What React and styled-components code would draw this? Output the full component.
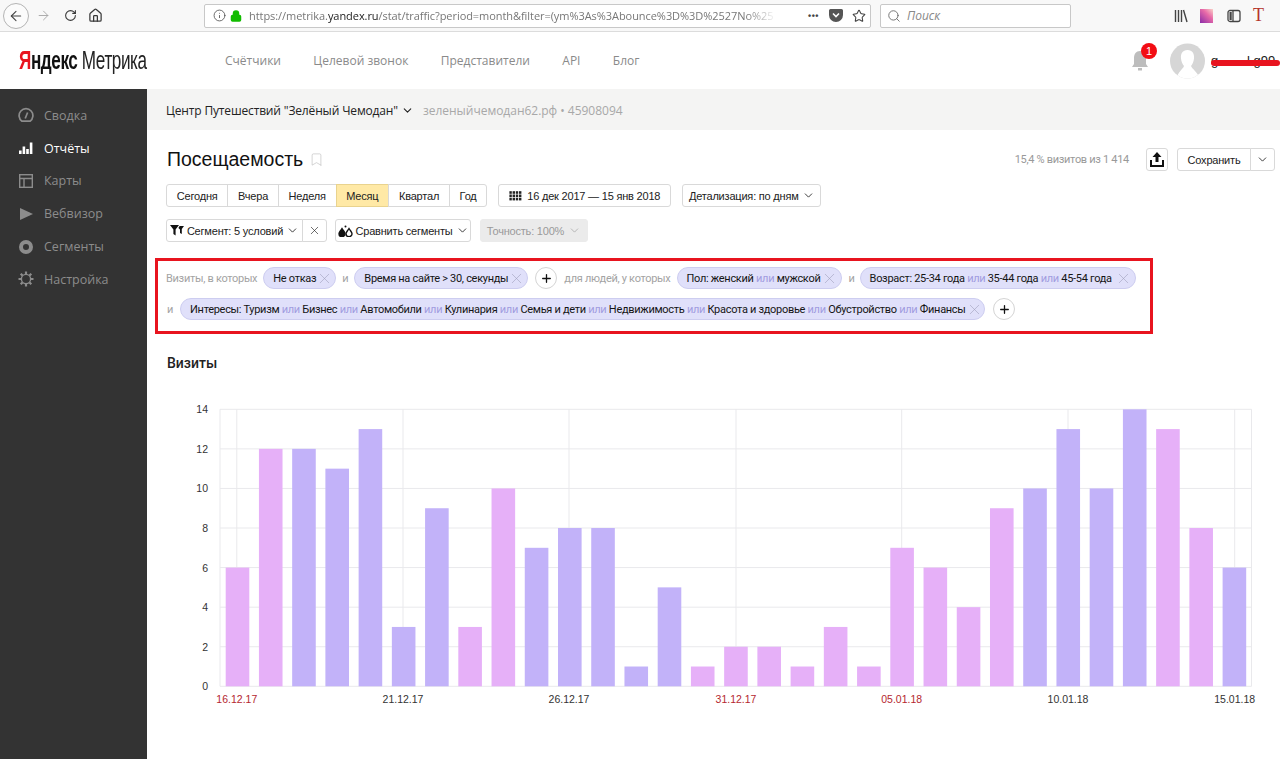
import React from 'react';
import styled, { createGlobalStyle } from 'styled-components';
import { ArrowLeft, ArrowRight, RotateCw, Home, Info, Lock, Star, Search, X, ChevronDown, Plus, Bookmark } from 'lucide-react';

const GlobalStyle = createGlobalStyle`
  html, body { margin: 0; padding: 0; background: #fff; }
  body { font-family: "Liberation Sans", Arial, sans-serif; color: #222; }
`;

const Page = styled.div`
  width: 1280px;
  height: 759px;
  overflow: hidden;
  display: flex;
  flex-direction: column;
`;

/* browser chrome */
const BrowserBar = styled.div`
  height: 32px;
  box-sizing: border-box;
  flex: none;
  background: #f8f8f8;
  border-bottom: 1px solid #dcdcdc;
  display: flex;
  align-items: center;
  color: #444;
`;
const BackCircle = styled.div`
  width: 26px;
  height: 26px;
  margin-left: 3px;
  border: 1px solid #b4b4b4;
  border-radius: 50%;
  box-sizing: border-box;
  display: flex;
  align-items: center;
  justify-content: center;
  background: #fbfbfb;
`;
const NavIcon = styled.div`
  display: flex;
  flex: none;
  margin-left: ${p => p.$left}px;
  color: ${p => p.$dim ? '#a8a8a8' : '#3a3a3a'};
`;
const UrlBox = styled.div`
  margin-left: 101px;
  width: 667px;
  height: 24px;
  box-sizing: border-box;
  background: #fff;
  border: 1px solid #c8c8c8;
  border-radius: 2px;
  display: flex;
  align-items: center;
  padding: 0 4px 0 8px;
  gap: 4px;
`;
const UrlText = styled.div`
  width: 528px;
  flex: none;
  margin-left: 3px;
  font: 11px "Open Sans", sans-serif;
  letter-spacing: -0.06px;
  color: #777;
  white-space: nowrap;
  mask-image: linear-gradient(to right, #000 94%, transparent 100%);
  b { font-weight: 400; color: #222; }
`;
const Dots = styled.span`
  margin-left: auto;
  font: bold 9px "Liberation Sans", sans-serif;
  letter-spacing: 0.5px;
  color: #444;
  margin-right: 6px;
`;
const SearchBox = styled(UrlBox)`
  margin-left: 9px;
  width: 191px;
  padding: 0 6px;
  gap: 6px;
  font: italic 12px "Open Sans", sans-serif;
  color: #888;
`;
const ChromeRight = styled.div`
  margin-left: auto;
  width: 106px;
  display: flex;
  align-items: center;
`;
const Swatch = styled.div`
  width: 13px;
  height: 14px;
  margin-left: 12px;
  background: linear-gradient(45deg, #8a2ca8, #e86aa8 60%, #f9d3c8);
`;
const RedT = styled.div`
  margin-left: 12px;
  font: 18px "Liberation Serif", serif;
  color: #b5342a;
`;

/* site header */
const Header = styled.header`
  height: 57px;
  flex: none;
  background: #fff;
  display: flex;
  align-items: center;
`;
const LogoCell = styled.div`
  width: 147px;
  padding-left: 19px;
  box-sizing: border-box;
  flex: none;
`;
const Logo = styled.div`
  display: inline-block;
  font: 25px "Liberation Sans", sans-serif;
  letter-spacing: -0.6px;
  white-space: nowrap;
  color: #222;
  transform: scaleX(0.685);
  transform-origin: left center;
  b { font-weight: 700; color: #111; }
  i { font-style: normal; color: #e8141f; font-weight: 700; }
`;
const TopNav = styled.nav`
  margin-left: 78px;
  display: flex;
  gap: 32.4px;
`;
const TopLink = styled.a`
  font: 12px "Open Sans", sans-serif;
  color: #8a8a8a;
`;
const UserArea = styled.div`
  margin-left: auto;
  display: flex;
  align-items: center;
  width: 150px;
  flex: none;
  position: relative;
`;
const Badge = styled.span`
  position: absolute;
  left: 11px;
  top: 0;
  width: 16px;
  height: 16px;
  border-radius: 50%;
  background: #f20d14;
  color: #fff;
  font: 11px/16px "Liberation Sans", sans-serif;
  text-align: center;
`;
const UserName = styled.span`
  margin-left: 6px;
  font: 13px "Liberation Sans", sans-serif;
  white-space: pre;
  color: #222;
`;
const Scribble = styled.div`
  position: absolute;
  left: 81px;
  top: 17px;
  width: 69px;
  height: 6px;
  border-radius: 3px;
  background: #e8141f;
`;

/* body */
const Body = styled.div`
  flex: 1;
  display: flex;
  min-height: 0;
`;
const Sidebar = styled.aside`
  width: 147px;
  flex: none;
  background: #333;
  padding-top: 10px;
  box-sizing: border-box;
`;
const SideItem = styled.div`
  height: 32.8px;
  display: flex;
  align-items: center;
  padding-left: 18px;
  gap: 10px;
  font: 12.5px "Open Sans", sans-serif;
  color: ${p => p.$active ? '#fff' : '#8c8c8c'};
`;
const Main = styled.main`
  flex: 1;
  min-width: 0;
`;
const SubHeader = styled.div`
  height: 41px;
  box-sizing: border-box;
  background: #f4f4f3;
  padding: 1px 0 0 19px;
  display: flex;
  align-items: center;
  font: 12px "Open Sans", sans-serif;
  letter-spacing: -0.15px;
  color: #222;
`;
const Muted = styled.span`
  margin-left: 9px;
  letter-spacing: -0.02px;
  color: #a8a8a8;
`;
const TitleRow = styled.div`
  height: 54px;
  box-sizing: border-box;
  padding: 5px 5px 0 20px;
  display: flex;
  align-items: center;
`;
const Title = styled.h1`
  margin: 0;
  font: 400 19.5px "Liberation Sans", sans-serif;
  color: #111;
`;
const Stat = styled.span`
  margin-left: auto;
  margin-right: 17px;
  font: 11px "Roboto", sans-serif;
  letter-spacing: -0.3px;
  color: #999;
`;
const Controls = styled.div`
  display: flex;
  align-items: center;
  padding-left: 19px;
  margin-bottom: ${p => p.$gap}px;
`;
const Btn = styled.button`
  height: 23px;
  padding: ${p => p.$pad || '0 9.75px'};
  margin: 0 0 0 ${p => p.$left || 0}px;
  box-sizing: border-box;
  display: inline-flex;
  align-items: center;
  gap: ${p => p.$gap ?? 4}px;
  width: ${p => p.$w ? `${p.$w}px` : 'auto'};
  justify-content: ${p => p.$w ? 'center' : 'flex-start'};
  background: ${p => p.$on ? '#ffe9a6' : p.$off ? '#ebebeb' : '#fff'};
  border: 1px solid ${p => p.$on ? '#e9d38e' : p.$off ? '#ebebeb' : '#d9d9d9'};
  border-radius: 3px;
  font: 11px "Liberation Sans", sans-serif;
  letter-spacing: -0.2px;
  color: ${p => p.$off ? '#9a9a9a' : '#222'};
  white-space: nowrap;
  svg { flex: none; }
`;
const Group = styled.div`
  display: flex;
  margin-left: ${p => p.$left || 0}px;
  ${Btn} { border-radius: 0; margin-left: -1px; }
  ${Btn}:first-child { border-radius: 3px 0 0 3px; margin-left: 0; }
  ${Btn}:last-child { border-radius: 0 3px 3px 0; }
`;

/* filter panel */
const FilterPanel = styled.section`
  margin: 16px 0 0 8px;
  width: 998px;
  height: 76px;
  box-sizing: border-box;
  border: 3px solid #e8141f;
  padding: 6px 0 0 8px;
  display: flex;
  flex-direction: column;
  gap: 9px;
`;
const FilterRow = styled.div`
  display: flex;
  align-items: center;
  height: 22px;
`;
const Hint = styled.span`
  font: 11px "Roboto", sans-serif;
  letter-spacing: -0.3px;
  color: #a3a3a3;
  margin: 0 ${p => p.$right}px 0 ${p => p.$left || 0}px;
  white-space: nowrap;
`;
const Chip = styled.div`
  height: 22px;
  width: ${p => p.$w}px;
  box-sizing: border-box;
  flex: none;
  border: 1px solid #cdcdf0;
  border-radius: 11px;
  background: #e0e0fa;
  display: flex;
  align-items: center;
  justify-content: space-between;
  padding: 0 3px 0 9px;
  font: 11px "Roboto", sans-serif;
  letter-spacing: -0.3px;
  color: #151515;
  white-space: nowrap;
  svg { color: #9c9cb8; flex: none; }
  em { font-style: normal; color: #a09ce0; }
`;
const AddBtn = styled.div`
  width: 22px;
  height: 22px;
  flex: none;
  box-sizing: border-box;
  border: 1px solid #d4d4d4;
  border-radius: 50%;
  display: flex;
  align-items: center;
  justify-content: center;
  background: #fff;
  color: #111;
  margin-left: ${p => p.$left}px;
`;
const SectionTitle = styled.h2`
  margin: 21px 0 0 20px;
  font: 500 14px "Roboto", sans-serif;
  color: #222;
`;
const ChartSvg = styled.svg`
  display: block;
  margin-top: 28px;
  margin-left: 19px;
`;

const ORIGIN_X = 166;
const ORIGIN_Y = 398;
const PLOT = { left: 220, right: 1251.5, top: 408.3, bottom: 685.3 };
const BAR_W = 23.6;
const BAR_STEP = 33.23;
const FIRST_BAR = 225.7;
const UNIT = (PLOT.bottom - PLOT.top) / 14;
const PINK = '#e6b0f8';
const VIOLET = '#c2b2f9';

const bars = [
  [6, 'p'], [12, 'p'], [12, 'v'], [11, 'v'], [13, 'v'], [3, 'v'], [9, 'v'], [3, 'p'], [10, 'p'], [7, 'v'], [8, 'v'],
  [8, 'v'], [1, 'v'], [5, 'v'], [1, 'p'], [2, 'p'], [2, 'p'], [1, 'p'], [3, 'p'], [1, 'p'], [7, 'p'], [6, 'p'],
  [4, 'p'], [9, 'p'], [10, 'v'], [13, 'v'], [10, 'v'], [14, 'v'], [13, 'p'], [8, 'p'], [6, 'v'],
];

const dates = [
  ['16.12.17', 236.8, true], ['21.12.17', 403, false], ['26.12.17', 569, false], ['31.12.17', 736, true],
  ['05.01.18', 901.7, true], ['10.01.18', 1068, false], ['15.01.18', 1234.7, false],
];

const Chart = () => (
  <ChartSvg width="1100" height="320" viewBox={`${ORIGIN_X} ${ORIGIN_Y} 1100 320`} fontFamily="Liberation Sans, sans-serif" fontSize="10.5">
    {[0, 2, 4, 6, 8, 10, 12, 14].map(v => {
      const y = PLOT.bottom - v * UNIT;
      return (
        <g key={v}>
          <line x1={PLOT.left} x2={PLOT.right} y1={y} y2={y} stroke="#e9e9ec" />
          <text x="208" y={y + 4} textAnchor="end" fill="#333">{v}</text>
        </g>
      );
    })}
    <line x1={PLOT.left} x2={PLOT.left} y1={PLOT.top} y2={PLOT.bottom} stroke="#e9e9ec" />
    <line x1={PLOT.right} x2={PLOT.right} y1={PLOT.top} y2={PLOT.bottom} stroke="#e9e9ec" />
    {dates.map(([label, x, weekend]) => (
      <g key={label}>
        <line x1={x} x2={x} y1={PLOT.top} y2={PLOT.bottom} stroke="#e9e9ec" />
        <text x={x} y="702" textAnchor="middle" fill={weekend ? '#b5272f' : '#333'}>{label}</text>
      </g>
    ))}
    {bars.map(([v, kind], i) => (
      <rect
        key={i}
        x={FIRST_BAR + i * BAR_STEP}
        y={PLOT.bottom - v * UNIT}
        width={BAR_W}
        height={v * UNIT}
        fill={kind === 'p' ? PINK : VIOLET}
      />
    ))}
  </ChartSvg>
);

const Gauge = () => (
  <svg width="16" height="16" viewBox="0 0 16 16" fill="none" stroke="currentColor" strokeWidth="1.7">
    <path d="M4 14.2A6.9 6.9 0 1 1 12 14.2Z" />
    <path d="M7.2 11.5L9.6 5.5" />
  </svg>
);
const Bars = () => (
  <svg width="16" height="16" viewBox="0 0 16 16" fill="currentColor">
    <rect x="1" y="10.5" width="2.6" height="3.5" />
    <rect x="4.6" y="6.5" width="2.6" height="7.5" />
    <rect x="8.2" y="9" width="2.6" height="5" />
    <rect x="11.8" y="2.5" width="2.6" height="11.5" />
  </svg>
);
const Panels = () => (
  <svg width="16" height="16" viewBox="0 0 16 16" fill="none" stroke="currentColor" strokeWidth="1.4">
    <rect x="1.7" y="1.7" width="12.6" height="12.6" />
    <path d="M1.7 5.5H14.3M6 5.5V14.3" />
  </svg>
);
const Play = () => (
  <svg width="16" height="16" viewBox="0 0 16 16" fill="currentColor">
    <path d="M2 2L15 8L2 14Z" />
  </svg>
);
const Donut = () => (
  <svg width="16" height="16" viewBox="0 0 16 16" fill="none" stroke="currentColor" strokeWidth="4">
    <circle cx="8" cy="8" r="5" />
  </svg>
);
const Gear = () => (
  <svg width="16" height="16" viewBox="0 0 16 16" fill="none" stroke="currentColor" strokeWidth="1.4">
    <circle cx="8" cy="8" r="4.6" />
    <path strokeWidth="2.2" d="M8 .5V3M8 13V15.5M.5 8H3M13 8H15.5M2.7 2.7L4.5 4.5M11.5 11.5L13.3 13.3M13.3 2.7L11.5 4.5M4.5 11.5L2.7 13.3" />
  </svg>
);
const Calendar = () => (
  <svg width="13" height="10" viewBox="0 0 13 10" fill="#222">
    {[0, 1, 2].map(r => [0, 1, 2, 3].map(c => (
      <rect key={`${r}${c}`} x={c * 3.2 + 0.4} y={r * 3.3 + 0.2} width="2.4" height="2.6" />
    )))}
  </svg>
);
const Funnel = () => (
  <svg width="14" height="11" viewBox="0 0 14 11" fill="#111">
    <path d="M0 0H9L5.6 4.5V10.5L3.4 9V4.5Z" />
    <path d="M9.6 1H14L11.8 4V9L10 8V4.5L8.4 3Z" />
  </svg>
);
const Drops = () => (
  <svg width="15" height="12" viewBox="0 0 15 12" fill="none" stroke="#111" strokeWidth="1.4">
    <path fill="#111" d="M4 3.5C2.5 6 1 7 1 8.7A3 3 0 0 0 7 8.7C7 7 5.5 6 4 3.5Z" />
    <path d="M11 3.5C9.5 6 8 7 8 8.7A3 3 0 0 0 14 8.7C14 7 12.5 6 11 3.5Z" />
    <circle cx="7.5" cy="1.5" r="1" fill="#111" stroke="none" />
  </svg>
);
const ShareIcon = () => (
  <svg width="14" height="15" viewBox="0 0 14 15" fill="#111">
    <path d="M7 0L11.5 5H8.5V10H5.5V5H2.5Z" />
    <path d="M0 8H2V13H12V8H14V15H0Z" />
  </svg>
);
const BellIcon = () => (
  <svg width="20" height="24" viewBox="0 0 20 24" fill="#bdbdbd" style={{ flex: 'none' }}>
    <path d="M10 2C6 2 4 5 4 9V15L2 18H18L16 15V9C16 5 14 2 10 2Z" />
    <rect x="8" y="19" width="4" height="2.5" />
  </svg>
);
const Avatar = () => (
  <svg width="35" height="36" viewBox="0 0 35 36">
    <defs>
      <clipPath id="avatarClip"><circle cx="17.5" cy="18" r="17.5" /></clipPath>
    </defs>
    <circle cx="17.5" cy="18" r="17.5" fill="#d6d6d6" />
    <g clipPath="url(#avatarClip)" fill="#fff">
      <path d="M17.5 7C22.5 7 24.5 11 24 15.5C23.7 19 22.5 21 21 23C22 26 27 28 30 36H6C8 29 13 26 14 23C12.5 21 11.3 19 11 15.5C10.5 11 12.5 7 17.5 7Z" />
    </g>
  </svg>
);
const LibraryIcon = () => (
  <svg width="14" height="14" viewBox="0 0 14 14" stroke="#444" strokeWidth="1.4" fill="none">
    <path d="M1.5 1V13M4.5 1V13M7.5 1V13M9.5 1L13 13" />
  </svg>
);
const SidebarIcon = () => (
  <svg width="14" height="14" viewBox="0 0 14 14" stroke="#444" strokeWidth="1.3" fill="none">
    <rect x="1" y="1.5" width="12" height="11" rx="2" />
    <path d="M6 1.5V12.5" />
    <rect x="2.5" y="3" width="2.2" height="8" fill="#444" stroke="none" />
  </svg>
);
const PocketIcon = () => (
  <svg width="14" height="13" viewBox="0 0 14 13">
    <path fill="#555" d="M1.5 0H12.5A1.5 1.5 0 0 1 14 1.5V6A7 7 0 0 1 0 6V1.5A1.5 1.5 0 0 1 1.5 0Z" />
    <path fill="none" stroke="#fff" strokeWidth="1.6" d="M4 4.5L7 7.5L10 4.5" />
  </svg>
);
const Close = () => <X size={17} strokeWidth={0.8} />;
const Chevron = () => <ChevronDown size={13} strokeWidth={1.6} />;

const menu = [
  ['Сводка', Gauge],
  ['Отчёты', Bars, true],
  ['Карты', Panels],
  ['Вебвизор', Play],
  ['Сегменты', Donut],
  ['Настройка', Gear],
];

const App = () => (
  <Page>
    <GlobalStyle />
    <BrowserBar>
      <BackCircle><ArrowLeft size={16} strokeWidth={1.6} /></BackCircle>
      <NavIcon $left={7} $dim><ArrowRight size={15} strokeWidth={1.5} /></NavIcon>
      <NavIcon $left={13}><RotateCw size={13} strokeWidth={2} /></NavIcon>
      <NavIcon $left={11}><Home size={15} strokeWidth={2} /></NavIcon>
      <UrlBox>
        <Info size={13} strokeWidth={1.6} color="#555" />
        <Lock size={12} strokeWidth={3} color="#12bc00" fill="#12bc00" />
        <UrlText>https://metrika.<b>yandex.ru</b>/stat/traffic?period=month&amp;filter=(ym%3As%3Abounce%3D%3D%2527No%25</UrlText>
        <Dots>•••</Dots>
        <PocketIcon />
        <Star size={14} strokeWidth={1.8} color="#444" style={{ marginLeft: 5 }} />
      </UrlBox>
      <SearchBox>
        <Search size={14} strokeWidth={1.5} color="#666" />
        Поиск
      </SearchBox>
      <ChromeRight>
        <LibraryIcon />
        <Swatch />
        <NavIcon $left={14}><SidebarIcon /></NavIcon>
        <RedT>T</RedT>
      </ChromeRight>
    </BrowserBar>

    <Header>
      <LogoCell><Logo><i>Я</i><b>ндекс</b> Метрика</Logo></LogoCell>
      <TopNav>
        <TopLink>Счётчики</TopLink>
        <TopLink>Целевой звонок</TopLink>
        <TopLink>Представители</TopLink>
        <TopLink>API</TopLink>
        <TopLink>Блог</TopLink>
      </TopNav>
      <UserArea>
        <BellIcon />
        <Badge>1</Badge>
        <NavIcon $left={20}><Avatar /></NavIcon>
        <UserName>g        l g99</UserName>
        <Scribble />
      </UserArea>
    </Header>

    <Body>
      <Sidebar>
        {menu.map(([label, Icon, active]) => (
          <SideItem key={label} $active={active}><Icon />{label}</SideItem>
        ))}
      </Sidebar>
      <Main>
        <SubHeader>
          Центр Путешествий "Зелёный Чемодан"
          <ChevronDown size={13} style={{ marginLeft: 3 }} />
          <Muted>зеленыйчемодан62.рф • 45908094</Muted>
        </SubHeader>

        <TitleRow>
          <Title>Посещаемость</Title>
          <Bookmark size={15} strokeWidth={1} color="#bbb" style={{ marginLeft: 6 }} />
          <Stat>15,4 % визитов из 1 414</Stat>
          <Btn $w={22} $pad="0"><ShareIcon /></Btn>
          <Group $left={9}>
            <Btn $w={74} $pad="0">Сохранить</Btn>
            <Btn $w={25} $pad="0"><Chevron /></Btn>
          </Group>
        </TitleRow>

        <Controls $gap={12}>
          <Group>
            <Btn>Сегодня</Btn>
            <Btn>Вчера</Btn>
            <Btn>Неделя</Btn>
            <Btn $on>Месяц</Btn>
            <Btn>Квартал</Btn>
            <Btn>Год</Btn>
          </Group>
          <Btn $left={11} $gap={5} $w={173} $pad="0"><Calendar /> 16 дек 2017 — 15 янв 2018</Btn>
          <Btn $left={11} $w={139} $pad="0" $gap={3}>Детализация: по дням <Chevron /></Btn>
        </Controls>

        <Controls $gap={0}>
          <Group>
            <Btn $w={137} $pad="0" $gap={3}><Funnel /> Сегмент: 5 условий <Chevron /></Btn>
            <Btn $w={25} $pad="0"><X size={13} strokeWidth={1.2} /></Btn>
          </Group>
          <Btn $left={8} $w={136} $pad="0" $gap={3}><Drops /> Сравнить сегменты <Chevron /></Btn>
          <Btn $left={9} $off $w={108} $pad="0">Точность: 100% <ChevronDown size={13} strokeWidth={1.2} /></Btn>
        </Controls>

        <FilterPanel>
          <FilterRow>
            <Hint $right={6}>Визиты, в которых</Hint>
            <Chip $w={73}>Не отказ <Close /></Chip>
            <Hint $left={6} $right={6}>и</Hint>
            <Chip $w={174}>Время на сайте &gt; 30, секунды <Close /></Chip>
            <AddBtn $left={7}><Plus size={13} strokeWidth={2.4} /></AddBtn>
            <Hint $left={7} $right={6}>для людей, у которых</Hint>
            <Chip $w={165}><span>Пол: женский <em>или</em> мужской</span> <Close /></Chip>
            <Hint $left={7} $right={5}>и</Hint>
            <Chip $w={276}><span>Возраст: 25-34 года <em>или</em> 35-44 года <em>или</em> 45-54 года</span> <Close /></Chip>
          </FilterRow>
          <FilterRow>
            <Hint $left={1} $right={7}>и</Hint>
            <Chip $w={805}>
              <span>Интересы: Туризм <em>или</em> Бизнес <em>или</em> Автомобили <em>или</em> Кулинария <em>или</em> Семья и дети <em>или</em> Недвижимость <em>или</em> Красота и здоровье <em>или</em> Обустройство <em>или</em> Финансы</span>
              <Close />
            </Chip>
            <AddBtn $left={8}><Plus size={13} strokeWidth={2.4} /></AddBtn>
          </FilterRow>
        </FilterPanel>

        <SectionTitle>Визиты</SectionTitle>
        <Chart />
      </Main>
    </Body>
  </Page>
);

export default App;
